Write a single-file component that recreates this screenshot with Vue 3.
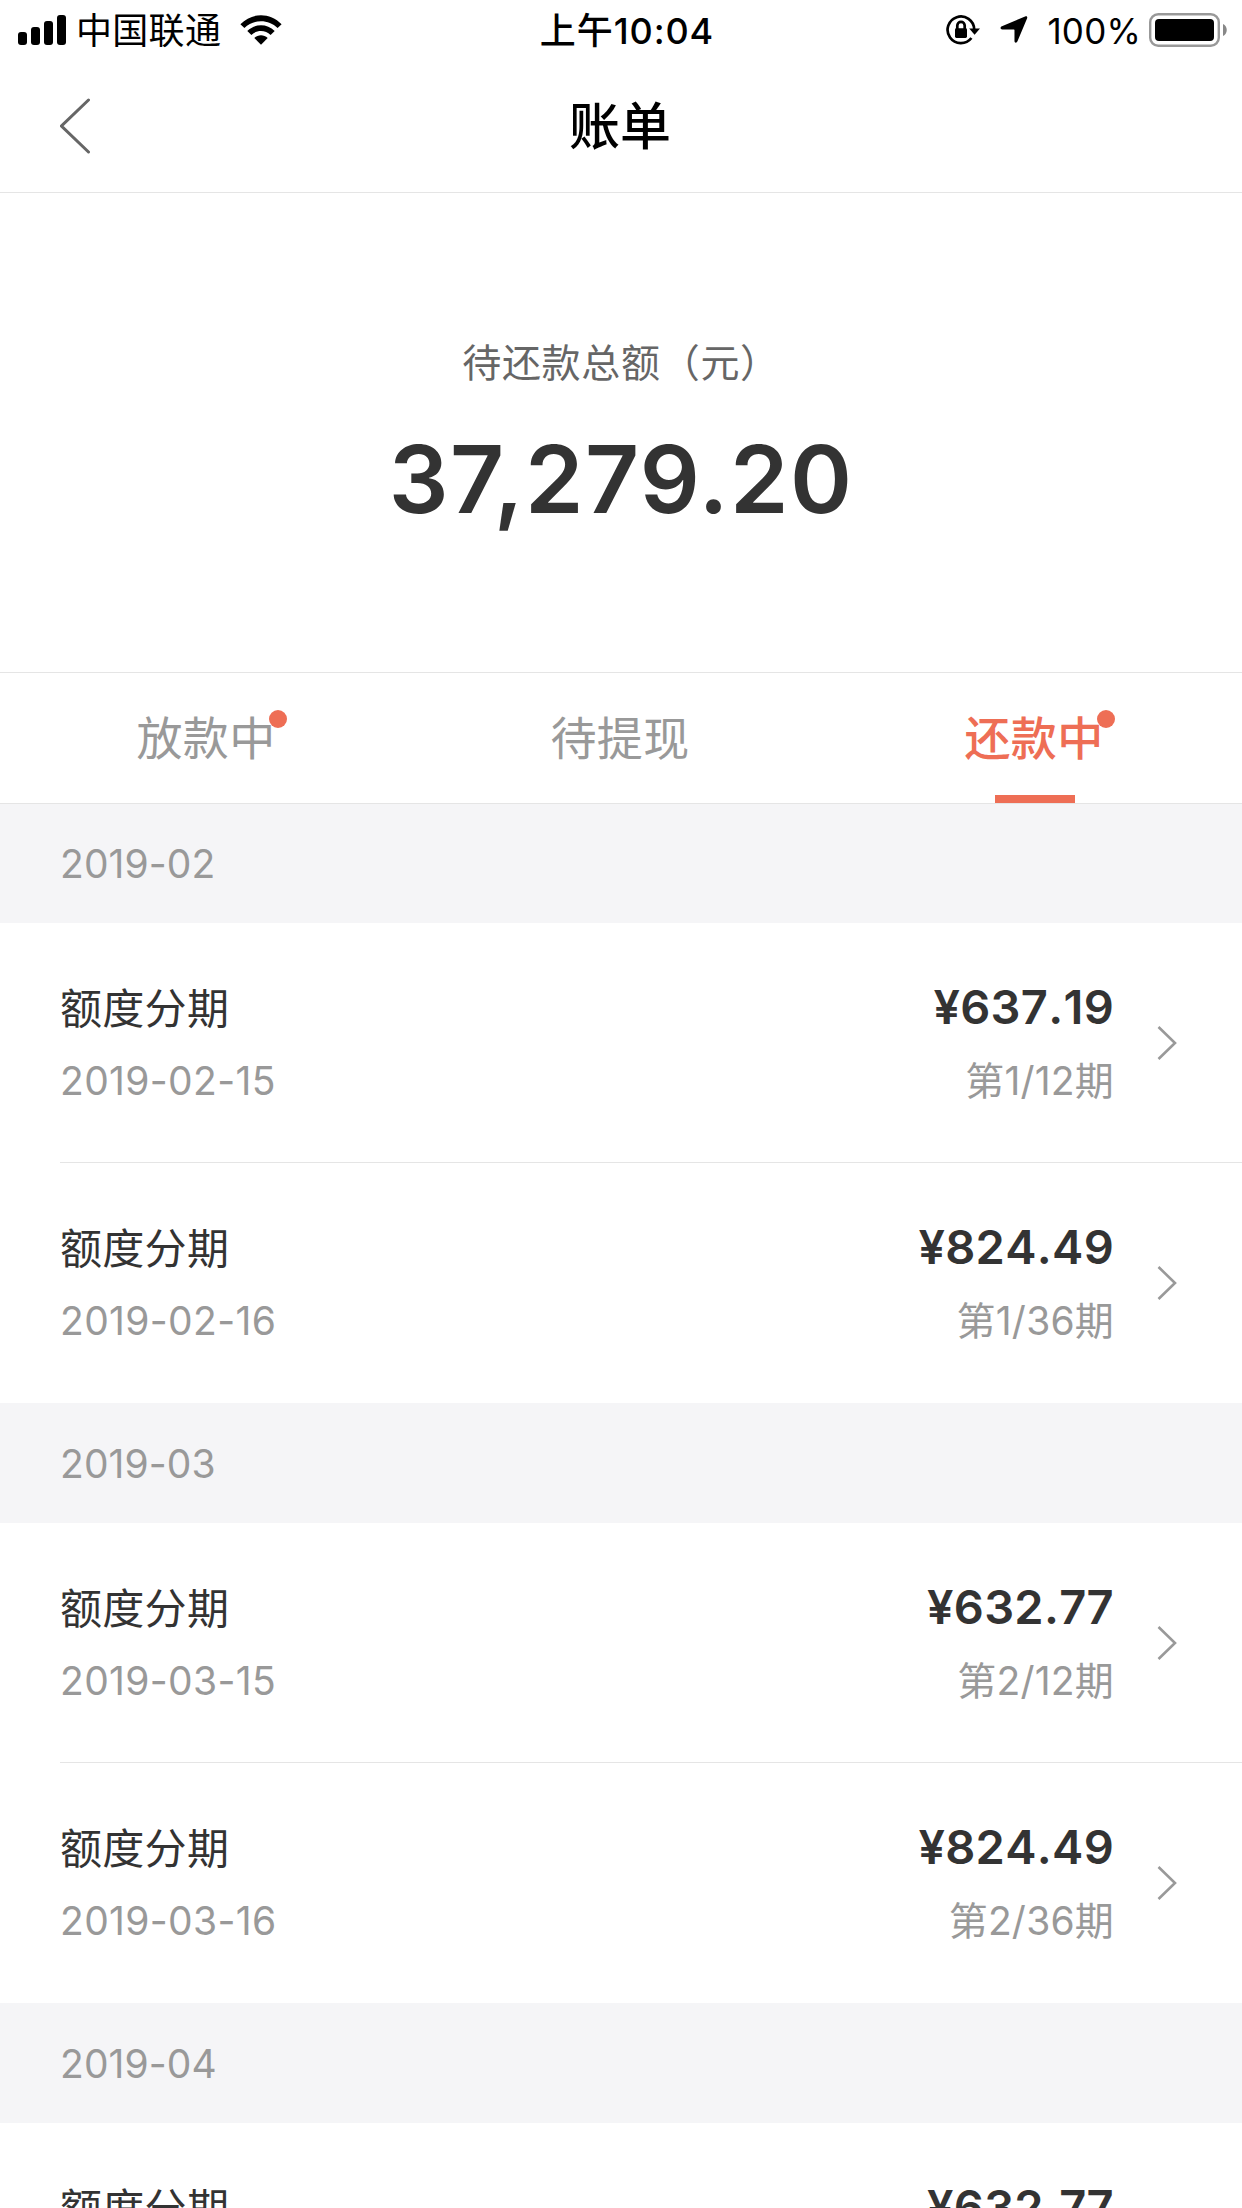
<script setup>
import { ref } from "vue";

const tabs = [
  { key: "lending", label: "放款中", dot: true },
  { key: "withdraw", label: "待提现", dot: false },
  { key: "repaying", label: "还款中", dot: true },
];
const activeTab = ref("repaying");

const groups = [
  {
    month: "2019-02",
    bills: [
      { date: "2019-02-15", amount: "637.19", period: "1/12" },
      { date: "2019-02-16", amount: "824.49", period: "1/36" },
    ],
  },
  {
    month: "2019-03",
    bills: [
      { date: "2019-03-15", amount: "632.77", period: "2/12" },
      { date: "2019-03-16", amount: "824.49", period: "2/36" },
    ],
  },
  {
    month: "2019-04",
    bills: [{ date: "2019-04-15", amount: "632.77", period: "3/12" }],
  },
];
</script>

<template>
  <div class="page">
    <!-- Status bar -->
    <div class="status-bar">
      <div class="status-left">
        <svg class="signal" width="48" height="30" viewBox="0 0 48 30">
          <rect x="0" y="17" width="9" height="13" rx="3" />
          <rect x="13" y="12" width="9" height="18" rx="3" />
          <rect x="26" y="6" width="9" height="24" rx="3" />
          <rect x="39" y="0" width="9" height="30" rx="3" />
        </svg>
        <span class="carrier">中国联通</span>
        <svg class="wifi" width="42" height="30" viewBox="0 0 42 30">
          <path d="M0.4 9.2C12 -2.8 30 -2.8 41.6 9.2L37.6 13.1C28.5 4 13.5 4 4.4 13.1Z" />
          <path d="M7.3 16C15 8.3 27 8.3 34.7 16L30.6 20.1C25.3 14.8 16.7 14.8 11.4 20.1Z" />
          <path d="M14.3 23C18.2 19.2 23.8 19.2 27.7 23L21 29.8Z" />
        </svg>
      </div>
      <div class="status-time">上午10:04</div>
      <div class="status-right">
        <svg class="lock" width="34" height="30" viewBox="0 0 34 30">
          <path class="ring" d="M28.2 14.5A13.3 13.3 0 1 0 25.4 23" />
          <path d="M23.2 13.4H34L28.6 19.8Z" />
          <rect x="9" y="13.2" width="12" height="9.8" rx="1.4" />
          <path class="shackle" d="M11.3 14V10.6A3.7 3.7 0 0 1 18.7 10.6V14" />
        </svg>
        <svg class="arrow" width="28" height="28" viewBox="0 0 29 29">
          <path d="M26 0.5C27.8 -0.2 28.7 0.9 28 2.6L18.1 26.2C17.3 28.2 15 28 15 25.8V14.6Q15 14 14.4 14H2.4C0.2 14 -0.1 11.6 2 10.7Z" />
        </svg>
        <span class="percent">100%</span>
        <svg class="battery" width="78" height="34" viewBox="0 0 78 34">
          <rect class="shell" x="1.2" y="1.2" width="68.6" height="31.6" rx="8" />
          <rect x="6" y="6" width="59" height="22" rx="4" />
          <path class="cap" d="M74 11C79 13 79 21 74 23Z" />
        </svg>
      </div>
    </div>

    <!-- Navigation bar -->
    <header class="nav">
      <button type="button" class="back" aria-label="返回">
        <svg width="32" height="56" viewBox="0 0 32 56">
          <path d="M28.5 2L1.5 28L28.5 54" />
        </svg>
      </button>
      <h1 class="nav-title">账单</h1>
    </header>

    <section class="summary">
      <p class="summary-label">待还款总额（元）</p>
      <p class="summary-total">37,279.20</p>
    </section>

    <nav class="tabs">
      <button
        v-for="tab in tabs"
        :key="tab.key"
        type="button"
        class="tab"
        :class="{ active: tab.key === activeTab }"
        @click="activeTab = tab.key"
      >
        <span class="tab-label">{{ tab.label }}<i v-if="tab.dot" class="dot"></i></span>
      </button>
    </nav>

    <section v-for="group in groups" :key="group.month" class="group">
      <h2 class="month">{{ group.month }}</h2>
      <div v-for="bill in group.bills" :key="bill.date" class="bill">
        <div class="bill-info">
          <span class="bill-name">额度分期</span>
          <span class="bill-date">{{ bill.date }}</span>
        </div>
        <div class="bill-pay">
          <span class="bill-amount">¥{{ bill.amount }}</span>
          <span class="bill-period">第{{ bill.period }}期</span>
        </div>
        <svg class="chevron" width="20" height="36" viewBox="0 0 20 36">
          <path d="M1.5 2L18 18L1.5 34" />
        </svg>
      </div>
    </section>
  </div>
</template>

<style>
body {
  margin: 0;
  background: #fff;
}
</style>

<style scoped>
.page {
  width: 1242px;
  height: 2208px;
  overflow: hidden;
  background: #fff;
  color: #333;
  font-family: Inter, "Noto Sans CJK SC", sans-serif;
  font-kerning: none;
}

button {
  padding: 0;
  border: none;
  background: none;
  font-family: inherit;
}

/* Status bar */
.status-bar {
  display: grid;
  grid-template-columns: 1fr auto 1fr;
  align-items: center;
  height: 60px;
  padding: 0 15px 0 18px;
  color: #000;
  font-size: 36px;
  line-height: 60px;
}

.status-left,
.status-right {
  display: flex;
  align-items: center;
}

.status-right {
  justify-content: flex-end;
}

.carrier {
  margin-left: 10px;
  padding-top: 3px;
  line-height: 57px;
  letter-spacing: 0.3px;
}

.wifi {
  margin-left: 19px;
}

.status-time {
  padding: 3px 0 0 9px;
  font-size: 36px;
  font-weight: 500;
  line-height: 57px;
  letter-spacing: 0.9px;
}

.lock .ring,
.lock .shackle {
  fill: none;
  stroke: #000;
  stroke-width: 2.7;
}

.arrow {
  margin-left: 20px;
}

.percent {
  margin-left: 19px;
  padding-top: 3px;
  font-size: 35px;
  line-height: 57px;
  letter-spacing: 0.2px;
}

.battery {
  margin-left: 8px;
}

.battery .shell {
  fill: none;
  stroke: #999;
  stroke-width: 2.4;
}

.battery .cap {
  fill: #888;
}

/* Navigation bar */
.nav {
  display: grid;
  grid-template-columns: 180px 1fr 180px;
  align-items: center;
  box-sizing: border-box;
  height: 133px;
  border-bottom: 1px solid #e5e5e5;
}

.back {
  display: flex;
  padding-left: 60px;
}

.back path {
  fill: none;
  stroke: #666;
  stroke-width: 3;
  stroke-linecap: round;
}

.nav-title {
  margin: 0;
  padding: 2px 2px 0 0;
  color: #000;
  font-size: 51px;
  font-weight: 500;
  line-height: 70px;
  text-align: center;
}

/* Total amount */
.summary {
  box-sizing: border-box;
  height: 479px;
  padding-top: 140px;
  text-align: center;
}

.summary p {
  margin: 0;
}

.summary-label {
  color: #666;
  font-size: 39px;
  line-height: 60px;
  letter-spacing: 0.7px;
}

.summary .summary-total {
  margin-top: 26px;
  font-size: 94px;
  font-weight: 600;
  font-kerning: normal;
  line-height: 120px;
  letter-spacing: 1.4px;
}

/* Tabs */
.tabs {
  display: grid;
  grid-template-columns: repeat(3, 1fr);
  box-sizing: border-box;
  height: 131px;
  border-top: 1px solid #e5e5e5;
}

.tab {
  display: flex;
  flex-direction: column;
  align-items: center;
  color: #999;
  font-size: 46px;
  line-height: 130px;
  letter-spacing: 0.4px;
}

.tab-label {
  position: relative;
  height: 122px;
  padding-right: 2px;
}

.tab.active {
  color: #ee6e55;
  font-weight: 500;
}

.tab.active::after {
  content: "";
  width: 80px;
  height: 8px;
  background: #ee6e55;
}

.dot {
  position: absolute;
  top: 37px;
  right: -9px;
  width: 18px;
  height: 18px;
  border-radius: 50%;
  background: #ee6e55;
}

/* Bill list */
.month {
  box-sizing: border-box;
  height: 120px;
  margin: 0;
  padding-left: 60px;
  background: #f5f5f7;
  color: #999;
  font-size: 39px;
  font-weight: 400;
  line-height: 121px;
  letter-spacing: 0.1px;
}

.tabs + .group .month {
  box-shadow: inset 0 1px #e5e5e5;
}

.bill {
  display: flex;
  align-items: center;
  box-sizing: border-box;
  height: 240px;
  margin-left: 60px;
  padding-right: 65px;
}

.bill:not(:last-child) {
  box-shadow: inset 0 -1px #e5e5e5;
}

.bill-info,
.bill-pay {
  display: flex;
  flex-direction: column;
  gap: 22px;
  padding-top: 3px;
  line-height: 50px;
}

.bill-pay {
  gap: 24px;
  padding-top: 1px;
  margin-left: auto;
  align-items: flex-end;
}

.bill-name {
  font-size: 42px;
  letter-spacing: 0.3px;
}

.bill-date,
.bill-period {
  color: #999;
  font-size: 39px;
}

.bill-date {
  letter-spacing: 0.35px;
}

.bill-period {
  letter-spacing: 0.2px;
}

.bill-amount {
  font-size: 47px;
  font-weight: 600;
  letter-spacing: 0.3px;
}

.chevron {
  margin-left: 43px;
}

.chevron path {
  fill: none;
  stroke: #999;
  stroke-width: 2.6;
}
</style>
